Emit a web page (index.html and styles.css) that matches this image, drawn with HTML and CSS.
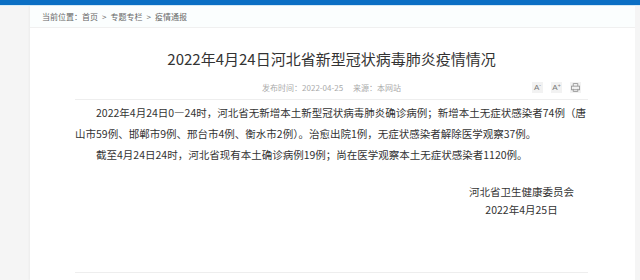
FILE: index.html
```html
<!DOCTYPE html>
<html lang="zh-CN">
<head>
    <meta charset="utf-8">
    <title>2022年4月24日河北省新型冠状病毒肺炎疫情情况</title>
    <link rel="stylesheet" href="styles.css">
</head>
<body>
    <div class="topbar"></div>

    <div class="page">
        <div class="crumb">
            当前位置：<a href="#">首页</a><span class="sep">&gt;</span><a href="#">专题专栏</a><span class="sep">&gt;</span><a href="#">疫情通报</a>
        </div>

        <div class="article">
            <h1 class="title">2022年4月24日河北省新型冠状病毒肺炎疫情情况</h1>

            <div class="meta">
                <span></span>
                <div class="info">
                    <span>发布时间：2022-04-25</span>
                    <span>来源：本网站</span>
                </div>
                <div class="tools">
                    <span class="tool">A<sup>-</sup></span>
                    <span class="tool">A<sup>+</sup></span>
                    <span class="tool">
                        <svg width="9" height="9" viewBox="0 0 10 10" fill="none" stroke="#999" stroke-width="1">
                            <path d="M2.5 3.5V0.5h5v3"/>
                            <rect x="0.5" y="3.5" width="9" height="4"/>
                            <path d="M2.5 6.5v3h5v-3"/>
                        </svg>
                    </span>
                </div>
            </div>

            <div class="content">
                <p>2022年4月24日0—24时，河北省无新增本土新型冠状病毒肺炎确诊病例；新增本土无症状感染者74例（唐山市59例、邯郸市9例、邢台市4例、衡水市2例）。治愈出院1例，无症状感染者解除医学观察37例。</p>
                <p>截至4月24日24时，河北省现有本土确诊病例19例；尚在医学观察本土无症状感染者1120例。</p>
                <div class="sign-row">
                    <p class="sign">河北省卫生健康委员会<br>2022年4月25日</p>
                </div>
            </div>
        </div>
    </div>
</body>
</html>
```

FILE: styles.css
```css
body {
    margin: 0;
    background: #f5f5f5;
    font-family: "Noto Sans CJK SC", "Noto Sans", sans-serif;
    color: #333;
}
.topbar {
    height: 5px;
    background: #0b6fc4;
    border-bottom: 1px solid #d6ecf8;
}
.page {
    margin: 0 5px 0 30px;
    background: #fff;
    box-shadow: -1px 0 2px rgba(0, 0, 0, 0.04);
    min-height: 274px;
}
.crumb {
    height: 21px;
    line-height: 21px;
    padding-left: 12px;
    font-size: 8px;
    color: #666;
    background: #fbfefe;
    border-bottom: 1px solid #f0f0f0;
}
.crumb a {
    color: #666;
    text-decoration: none;
}
.crumb .sep {
    margin: 0 4px;
}
.article {
    padding: 0 47px 0 45px;
}
.title {
    margin: 0;
    padding-top: 21px;
    font-size: 15px;
    line-height: 20px;
    font-weight: normal;
    text-align: center;
    color: #333;
}
.meta {
    display: grid;
    grid-template-columns: 1fr auto 1fr;
    align-items: center;
    margin-top: 11px;
    padding-bottom: 4px;
    border-bottom: 1px solid #eee;
    height: 15px;
}
.info {
    font-size: 8px;
    color: #aaa;
}
.info span + span {
    margin-left: 8px;
}
.tools {
    display: flex;
    justify-content: flex-end;
    gap: 8px;
    padding-right: 7px;
}
.tool {
    width: 11px;
    height: 11px;
    display: flex;
    align-items: center;
    justify-content: center;
    background: #f2f2f2;
    font-family: "Liberation Sans", sans-serif;
    font-size: 8px;
    color: #777;
    line-height: 1;
}
.tool sup {
    font-size: 5px;
    margin-top: -4px;
}
.content {
    font-size: 10.5px;
    line-height: 21px;
    color: #333;
    padding-top: 2px;
    padding-bottom: 53px;
    border-bottom: 1px solid #eee;
}
.content p {
    margin: 0;
    text-indent: 2em;
}
.sign-row {
    display: flex;
    justify-content: flex-end;
    margin-top: 18px;
}
.content .sign {
    text-indent: 0;
    text-align: center;
    line-height: 18px;
    margin-right: 14px;
}
```
